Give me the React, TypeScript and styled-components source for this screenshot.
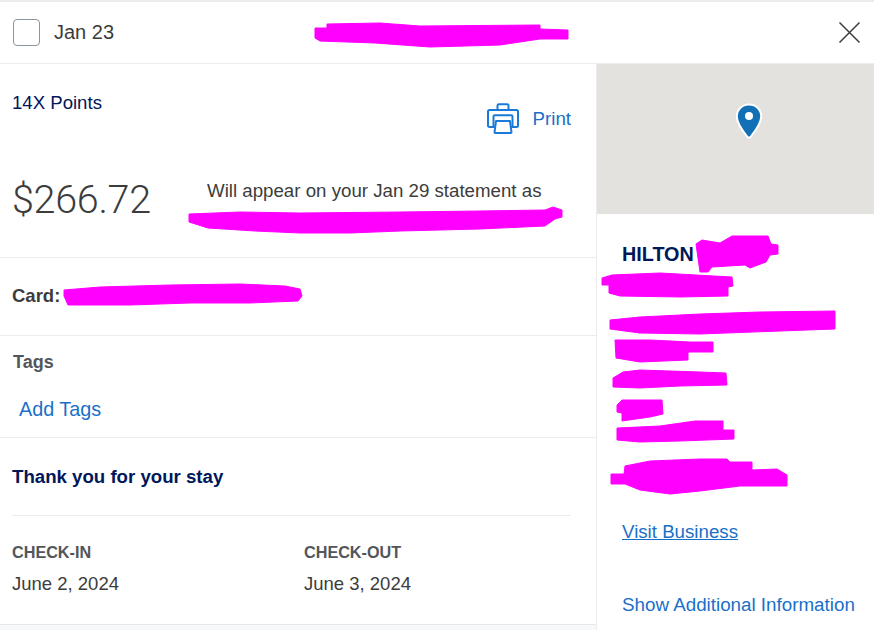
import React from "react";
import styled, { createGlobalStyle } from "styled-components";

const Global = createGlobalStyle`
  html, body { margin: 0; padding: 0; background: #fff; }
  body { font-family: "Liberation Sans", Arial, sans-serif; color: #333; overflow: hidden; }
  * { box-sizing: border-box; }
`;

const Page = styled.div`
  position: relative;
  width: 874px;
  height: 630px;
  overflow: hidden;
  background: #fff;
  border-top: 2px solid #ececec;
  display: flex;
  flex-direction: column;
`;

const Header = styled.header`
  height: 62px;
  flex: none;
  display: flex;
  align-items: center;
  padding: 0 13px;
  gap: 14px;
  border-bottom: 1px solid #ececec;
`;

const Checkbox = styled.span`
  width: 27px;
  height: 27px;
  border: 1px solid #8a95a0;
  border-radius: 4px;
  background: #fff;
`;

const DateText = styled.span`
  font-size: 20px;
  color: #3c3c3c;
  flex: 1;
`;

const CloseButton = styled.button`
  width: 23px;
  height: 23px;
  padding: 0;
  border: 0;
  background: none;
  display: flex;
  color: #3c3c3c;
`;

const Body = styled.div`
  flex: 1;
  display: grid;
  grid-template-columns: 597px 277px;
  min-height: 0;
`;

const Left = styled.main`
  border-right: 1px solid #ececec;
  display: flex;
  flex-direction: column;
`;

const Summary = styled.section`
  height: 194px;
  flex: none;
  padding: 27px 25px 0 12px;
  border-bottom: 1px solid #ececec;
`;

const TopRow = styled.div`
  display: flex;
  justify-content: space-between;
  align-items: flex-start;
  height: 88px;
`;

const Points = styled.span`
  font-size: 18.6px;
  line-height: 23px;
  color: #00175a;
`;

const PrintLink = styled.a`
  display: flex;
  align-items: center;
  gap: 14px;
  margin-top: 12px;
  font-size: 18.7px;
  color: #1a6fc9;
`;

const AmountRow = styled.div`
  display: flex;
  align-items: flex-start;
`;

const Amount = styled.span`
  font-family: Roboto, "Liberation Sans", sans-serif;
  font-size: 39.5px;
  font-weight: 300;
  line-height: 46px;
  width: 195px;
  margin-top: -2px;
  color: #3c3c3c;
  letter-spacing: -0.3px;
`;

const StatementText = styled.span`
  font-size: 18.7px;
  line-height: 24px;
  color: #3c3c3c;
`;

const CardRow = styled.section`
  height: 78px;
  flex: none;
  padding: 27px 12px 0;
  border-bottom: 1px solid #ececec;
  font-size: 18.5px;
  line-height: 22px;
  font-weight: 700;
  color: #3c3c3c;
`;

const TagsSection = styled.section`
  height: 102px;
  flex: none;
  padding: 15px 13px 0;
  border-bottom: 1px solid #ececec;
`;

const SectionLabel = styled.div`
  font-size: 18px;
  line-height: 22px;
  font-weight: 700;
  color: #53565a;
`;

const AddTags = styled.a`
  display: block;
  margin: 24px 0 0 6px;
  font-size: 19.8px;
  line-height: 24px;
  color: #1a6fc9;
`;

const StaySection = styled.section`
  flex: 1;
  padding: 27px 25px 0 12px;
  border-bottom: 1px solid #e6e8ea;
`;

const StayTitle = styled.h2`
  margin: 0;
  padding-bottom: 27px;
  border-bottom: 1px solid #ececec;
  font-size: 18.65px;
  line-height: 23px;
  font-weight: 700;
  color: #00175a;
`;

const StayGrid = styled.div`
  display: grid;
  grid-template-columns: 292px 1fr;
  padding-top: 27px;
`;

const StayLabel = styled.div`
  font-size: 16.2px;
  line-height: 18px;
  font-weight: 700;
  color: #53565a;
`;

const StayValue = styled.div`
  margin-top: 12px;
  font-size: 18.5px;
  line-height: 22px;
  color: #3c3c3c;
`;

const Footer = styled.div`
  height: 5px;
  flex: none;
  background: #f7f8f9;
`;

const Right = styled.aside`
  display: flex;
  flex-direction: column;
`;

const MapBox = styled.div`
  height: 150px;
  flex: none;
  background: #e3e2df;
  display: flex;
  align-items: center;
  justify-content: center;
  padding-left: 26px;
  padding-bottom: 36px;
`;

const Business = styled.div`
  flex: 1;
  padding: 28px 0 0 25px;
  display: flex;
  flex-direction: column;
`;

const BusinessName = styled.div`
  height: 278px;
  flex: none;
  font-size: 19.8px;
  line-height: 24px;
  font-weight: 700;
  color: #00175a;
`;

const VisitLink = styled.a`
  font-size: 18.7px;
  line-height: 24px;
  color: #1a6fc9;
  text-decoration: underline;
`;

const InfoLink = styled.a`
  margin-top: 49px;
  font-size: 18.8px;
  line-height: 24px;
  color: #1a6fc9;
  white-space: nowrap;
`;

const Redactions = styled.svg`
  position: absolute;
  left: 0;
  top: -2px;
  pointer-events: none;
`;

const PrinterIcon = () => (
  <svg width="32" height="32" viewBox="0 0 32 32" fill="none" stroke="#1a7ad9" strokeWidth="2" strokeLinejoin="round" strokeLinecap="round">
    <path d="M10.500 7V2.500c0-.8.500-1.300 1.300-1.300h8.400c.8 0 1.300.500 1.300 1.300V7" />
    <path d="M7 24H2.500C1.600 24 1 23.400 1 22.500V8.500C1 7.600 1.600 7 2.500 7h27c.9 0 1.500.6 1.500 1.500v14c0 .9-.6 1.500-1.500 1.500H25" />
    <path d="M6.500 24V13.500c0-.8.500-1.300 1.300-1.300h16.400c.8 0 1.300.500 1.300 1.300V24" />
    <path d="M9 18h14l1.500 11.300c0 .5-.3.700-.7.700H8.200c-.4 0-.7-.2-.7-.7z" fill="#fff" />
  </svg>
);

const PinIcon = () => (
  <svg width="28" height="36" viewBox="0 0 28 36">
    <path
      d="M14 1.500C6.800 1.500 1.800 7 1.800 13.500c0 6.500 6.700 15.500 10.700 20.500.8.900 2.200.900 3 0 4-5 10.700-14 10.700-20.500C26.200 7 21.200 1.500 14 1.500z"
      fill="#1170b6"
      stroke="#fff"
      strokeWidth="2"
    />
    <circle cx="14" cy="13" r="4" fill="#fff" />
  </svg>
);

const SCRIBBLES = [
  "M315 28 L327 28 L327 24 L380 23 L420 26 L540 25 L540 29 L568 30 L568 39 L540 39 L500 45 L430 47 L375 43 L320 41 L315 38 Z",
  "M189 214 L240 212 L300 213 L400 212 L480 211 L545 210 L553 207 L562 210 L562 217 L555 219 L545 226 L480 229 L400 231 L350 233 L300 233 L255 231 L208 228 L189 222 Z",
  "M64 290 L100 287 L170 285 L240 284 L285 286 L300 289 L302 296 L298 301 L250 303 L190 303 L130 305 L68 305 L64 296 Z",
  "M696 244 L702 240 L720 243 L732 236 L768 236 L771 244 L778 245 L778 254 L770 255 L766 262 L750 268 L745 265 L712 267 L708 272 L700 272 Z",
  "M602 278 L612 275 L660 273 L732 277 L733 286 L728 287 L728 296 L680 297 L620 296 L609 293 L609 285 L602 285 Z",
  "M610 320 L640 317 L700 314 L760 312 L835 311 L835 329 L780 331 L700 334 L640 333 L610 329 Z",
  "M615 340 L650 340 L690 342 L713 342 L713 352 L688 352 L688 360 L640 362 L616 358 Z",
  "M623 372 L640 370 L700 372 L726 373 L727 385 L680 386 L640 388 L613 387 L613 378 Z",
  "M622 400 L662 400 L663 414 L650 417 L622 421 L622 413 L617 412 L617 405 Z",
  "M617 428 L660 426 L695 421 L723 421 L723 430 L734 430 L734 439 L680 441 L640 442 L617 440 Z",
  "M625 466 L650 461 L700 459 L727 459 L730 462 L752 462 L752 470 L777 469 L787 475 L787 486 L740 486 L700 491 L670 494 L640 490 L625 484 L611 484 L611 474 L624 474 Z",
];

export default function App() {
  return (
    <>
      <Global />
      <Page>
        <Header>
          <Checkbox />
          <DateText>Jan 23</DateText>
          <CloseButton aria-label="Close">
            <svg width="23" height="23" viewBox="0 0 23 23" stroke="currentColor" strokeWidth="1.500" fill="none">
              <path d="M1.500 1.500L21.500 21.500M21.500 1.500L1.500 21.500" />
            </svg>
          </CloseButton>
        </Header>
        <Body>
          <Left>
            <Summary>
              <TopRow>
                <Points>14X Points</Points>
                <PrintLink>
                  <PrinterIcon />
                  Print
                </PrintLink>
              </TopRow>
              <AmountRow>
                <Amount>$266.72</Amount>
                <StatementText>Will appear on your Jan 29 statement as</StatementText>
              </AmountRow>
            </Summary>
            <CardRow>Card:</CardRow>
            <TagsSection>
              <SectionLabel>Tags</SectionLabel>
              <AddTags>Add Tags</AddTags>
            </TagsSection>
            <StaySection>
              <StayTitle>Thank you for your stay</StayTitle>
              <StayGrid>
                <div>
                  <StayLabel>CHECK-IN</StayLabel>
                  <StayValue>June 2, 2024</StayValue>
                </div>
                <div>
                  <StayLabel>CHECK-OUT</StayLabel>
                  <StayValue>June 3, 2024</StayValue>
                </div>
              </StayGrid>
            </StaySection>
            <Footer />
          </Left>
          <Right>
            <MapBox>
              <PinIcon />
            </MapBox>
            <Business>
              <BusinessName>HILTON</BusinessName>
              <VisitLink>Visit Business</VisitLink>
              <InfoLink>Show Additional Information</InfoLink>
            </Business>
          </Right>
        </Body>
        <Redactions width="874" height="630" viewBox="0 0 874 630" fill="#ff00ff" stroke="#ff00ff" strokeLinejoin="round">
          {SCRIBBLES.map((d) => (
            <path key={d} d={d} />
          ))}
        </Redactions>
      </Page>
    </>
  );
}
